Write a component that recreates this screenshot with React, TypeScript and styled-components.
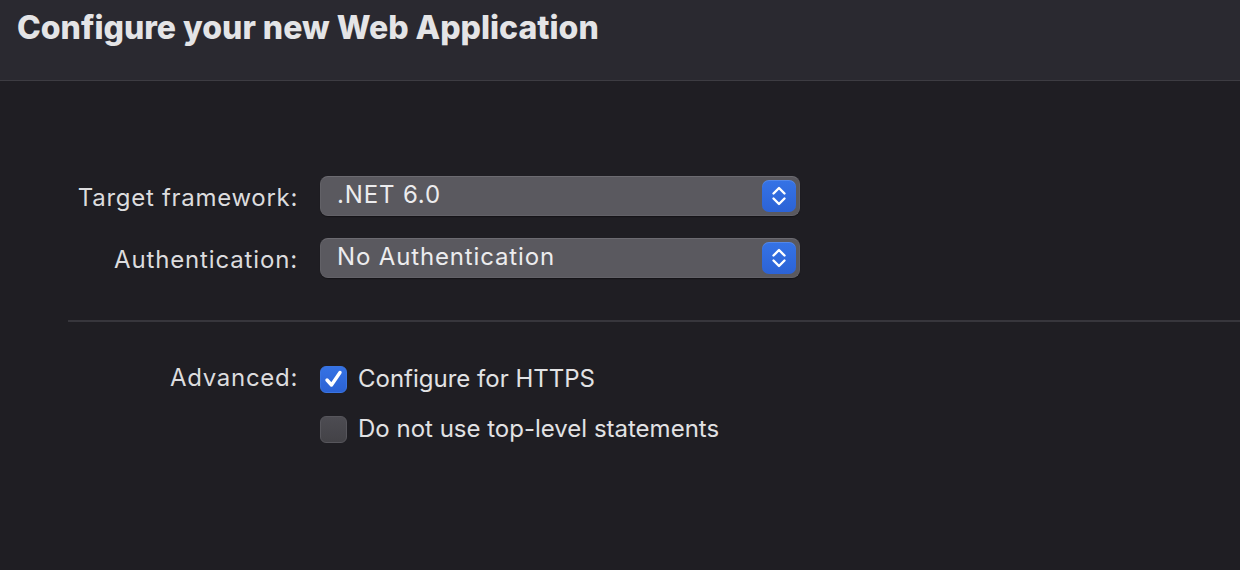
import React from 'react';
import styled, { createGlobalStyle } from 'styled-components';

const GlobalStyle = createGlobalStyle`
  html, body {
    margin: 0;
    padding: 0;
    background: #1f1e23;
  }
  body {
    font-family: Inter, "Noto Sans", "Liberation Sans", sans-serif;
    -webkit-font-smoothing: antialiased;
  }
`;

const Page = styled.div`
  width: 1240px;
  height: 570px;
  background: #1f1e23;
  overflow: hidden;
`;

// Title bar across the top
const Header = styled.header`
  height: 80px;
  background: #2a2930;
  border-bottom: 1px solid #3d3c42;
  padding-left: 17px;
  box-sizing: content-box;
`;

const Title = styled.h1`
  margin: 0;
  padding-top: 8px;
  font-size: 32px;
  font-weight: 800;
  color: #e4e4e6;
  line-height: 40px;
`;

const Body = styled.main`
  padding-top: 95px;
`;

const FormGrid = styled.div`
  display: grid;
  grid-template-columns: 297px 480px;
  column-gap: 23px;
  row-gap: 22px;
  align-items: center;
`;

const Label = styled.label<{ $wide?: boolean }>`
  justify-self: end;
  font-size: 24px;
  letter-spacing: ${({ $wide }) => ($wide ? '0.85px' : '0.7px')};
  color: #dcdcde;
  line-height: 28px;
  margin-top: 4px;
  margin-right: -1px;
`;

const Popup = styled.div`
  height: 40px;
  box-sizing: border-box;
  display: flex;
  align-items: center;
  justify-content: space-between;
  padding: 0 3px 0 16px;
  background: #5a595f;
  border: 1px solid #626167;
  border-top-color: #6c6b71;
  border-radius: 8px;
  box-shadow: 0 1px 1px rgba(0, 0, 0, 0.35);
`;

const PopupText = styled.span`
  font-size: 24px;
  letter-spacing: 0.85px;
  color: #ececee;
  line-height: 28px;
  margin-top: -2px;
`;

const Stepper = styled.span`
  width: 34px;
  height: 32px;
  border-radius: 7px;
  background: linear-gradient(#3573e6, #2c63d6);
  display: flex;
  align-items: center;
  justify-content: center;
  box-shadow: inset 0 1px 0 rgba(255, 255, 255, 0.15);
`;

const Divider = styled.hr`
  margin: 42px 0 0 68px;
  border: 0;
  height: 2px;
  background: #37363c;
`;

const AdvancedGrid = styled.div`
  display: grid;
  grid-template-columns: 297px auto;
  column-gap: 23px;
  padding-top: 43px;
  align-items: start;
`;

const AdvancedLabel = styled(Label)`
  margin-top: -1px;
`;

const CheckList = styled.div`
  display: flex;
  flex-direction: column;
  gap: 22px;
`;

const CheckRow = styled.div`
  display: flex;
  align-items: center;
  gap: 11px;
`;

const Box = styled.span<{ $checked: boolean }>`
  width: 27px;
  height: 27px;
  box-sizing: border-box;
  border-radius: 6px;
  display: flex;
  align-items: center;
  justify-content: center;
  background: ${({ $checked }) =>
    $checked ? 'linear-gradient(#3572e4, #2b62d4)' : 'linear-gradient(#4d4c52, #434247)'};
  border: 1px solid ${({ $checked }) => ($checked ? '#3a74e0' : '#57565c')};
`;

const CheckText = styled.span`
  font-size: 24px;
  color: #e2e2e4;
  line-height: 28px;
`;

const Chevrons = () => (
  <svg width="16" height="24" viewBox="0 0 16 24" fill="none">
    <path d="M2.5 9.5 L8 4 L13.5 9.5" stroke="#fff" strokeWidth="2.4" strokeLinecap="round" strokeLinejoin="round" />
    <path d="M2.5 14.5 L8 20 L13.5 14.5" stroke="#fff" strokeWidth="2.4" strokeLinecap="round" strokeLinejoin="round" />
  </svg>
);

const Tick = () => (
  <svg width="21" height="21" viewBox="0 0 21 21" fill="none">
    <path d="M4 11 L8.5 16 L17 3.5" stroke="#fff" strokeWidth="3.4" strokeLinecap="round" strokeLinejoin="round" />
  </svg>
);

const PopupButton = ({ value }: { value: string }) => (
  <Popup>
    <PopupText>{value}</PopupText>
    <Stepper>
      <Chevrons />
    </Stepper>
  </Popup>
);

const Checkbox = ({ checked, label }: { checked: boolean; label: string }) => (
  <CheckRow>
    <Box $checked={checked}>{checked && <Tick />}</Box>
    <CheckText>{label}</CheckText>
  </CheckRow>
);

export default function App() {
  return (
    <Page>
      <GlobalStyle />
      <Header>
        <Title>Configure your new Web Application</Title>
      </Header>
      <Body>
        <FormGrid>
          <Label>Target framework:</Label>
          <PopupButton value=".NET 6.0" />
          <Label $wide>Authentication:</Label>
          <PopupButton value="No Authentication" />
        </FormGrid>
        <Divider />
        <AdvancedGrid>
          <AdvancedLabel>Advanced:</AdvancedLabel>
          <CheckList>
            <Checkbox checked label="Configure for HTTPS" />
            <Checkbox checked={false} label="Do not use top-level statements" />
          </CheckList>
        </AdvancedGrid>
      </Body>
    </Page>
  );
}
